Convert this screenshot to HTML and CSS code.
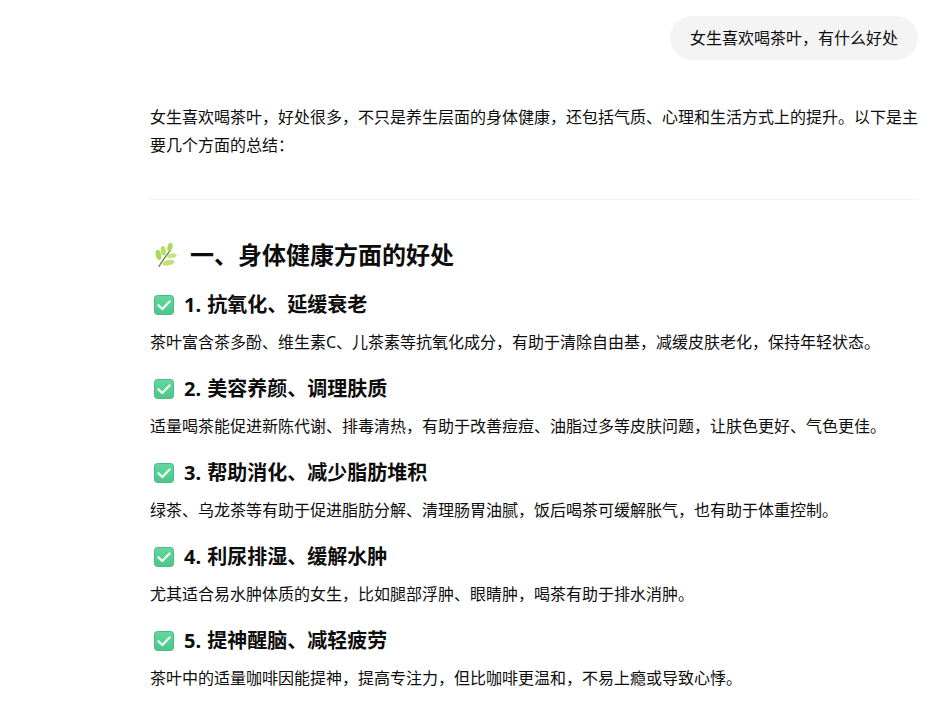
FILE: index.html
```html
<!DOCTYPE html>
<html lang="zh-CN">
<head>
<meta charset="utf-8">
<title>女生喜欢喝茶叶</title>
<link rel="stylesheet" href="styles.css">
</head>
<body>
<svg class="defs" width="0" height="0" aria-hidden="true">
  <defs>
    <linearGradient id="checkFill" x1="0" y1="0" x2="0" y2="1">
      <stop offset="0" stop-color="#63d79f"/>
      <stop offset="1" stop-color="#4cc68b"/>
    </linearGradient>
    <symbol id="check" viewBox="0 0 20 20">
      <rect x="0.500" y="0.500" width="19" height="19" rx="3" fill="url(#checkFill)" stroke="#49b885"/>
      <path d="M4.500 10.300L8.300 14L15.500 6.500" stroke="#eefaf3" stroke-width="2.400" fill="none" stroke-linecap="round" stroke-linejoin="round"/>
    </symbol>
  </defs>
</svg>
<main class="chat">
  <div class="user-row"><div class="bubble">女生喜欢喝茶叶&#xFF0C;有什么好处</div></div>
  <article class="answer">
    <p class="intro">女生喜欢喝茶叶&#xFF0C;好处很多&#xFF0C;不只是养生层面的身体健康&#xFF0C;还包括气质、心理和生活方式上的提升。以下是主要几个方面的总结&#xFF1A;</p>
    <hr class="rule">
    <h2 class="h2"><svg class="herb" viewBox="0 0 22 24"><path d="M4 23.500C7 18 11 13 15.500 7" stroke="#76834a" stroke-width="1.400" fill="none" stroke-linecap="round"/><ellipse cx="3.500" cy="12" rx="2.800" ry="5.300" transform="rotate(-12 3.500 12)" fill="#a9d95c"/><ellipse cx="8.300" cy="7.700" rx="2.500" ry="4.800" transform="rotate(-8 8.300 7.700)" fill="#b3de68"/><ellipse cx="15" cy="4.300" rx="2.500" ry="4.500" transform="rotate(12 15 4.300)" fill="#a9d95c"/><ellipse cx="16.700" cy="12.700" rx="5" ry="2.200" transform="rotate(-8 16.700 12.700)" fill="#c4e585"/><ellipse cx="13.300" cy="19.700" rx="6.200" ry="2.700" transform="rotate(-12 13.300 19.700)" fill="#bfe27a"/></svg><span>一、身体健康方面的好处</span></h2>
    <h3 class="h3"><svg class="check"><use href="#check"/></svg><span>1. 抗氧化、延缓衰老</span></h3>
    <p class="body">茶叶富含茶多酚、维生素C、儿茶素等抗氧化成分&#xFF0C;有助于清除自由基&#xFF0C;减缓皮肤老化&#xFF0C;保持年轻状态。</p>
    <h3 class="h3"><svg class="check"><use href="#check"/></svg><span>2. 美容养颜、调理肤质</span></h3>
    <p class="body">适量喝茶能促进新陈代谢、排毒清热&#xFF0C;有助于改善痘痘、油脂过多等皮肤问题&#xFF0C;让肤色更好、气色更佳。</p>
    <h3 class="h3"><svg class="check"><use href="#check"/></svg><span>3. 帮助消化、减少脂肪堆积</span></h3>
    <p class="body">绿茶、乌龙茶等有助于促进脂肪分解、清理肠胃油腻&#xFF0C;饭后喝茶可缓解胀气&#xFF0C;也有助于体重控制。</p>
    <h3 class="h3"><svg class="check"><use href="#check"/></svg><span>4. 利尿排湿、缓解水肿</span></h3>
    <p class="body">尤其适合易水肿体质的女生&#xFF0C;比如腿部浮肿、眼睛肿&#xFF0C;喝茶有助于排水消肿。</p>
    <h3 class="h3"><svg class="check"><use href="#check"/></svg><span>5. 提神醒脑、减轻疲劳</span></h3>
    <p class="body">茶叶中的适量咖啡因能提神&#xFF0C;提高专注力&#xFF0C;但比咖啡更温和&#xFF0C;不易上瘾或导致心悸。</p>
  </article>
</main>
</body>
</html>
```
FILE: styles.css
```css
html, body {
  margin: 0;
  padding: 0;
  background: #fff;
}
body {
  color: #0d0d0d;
  font-family: "Noto Sans", "Noto Sans CJK SC", sans-serif;
  font-size: 16px;
  line-height: 28px;
}
.defs {
  display: block;
  height: 0;
}
.chat {
  padding: 16px 26px 28px 150px;
  display: flex;
  flex-direction: column;
}
.user-row {
  display: flex;
  justify-content: flex-end;
}
.bubble {
  background: #f4f4f4;
  border-radius: 22px;
  padding: 8px 20px;
  font-size: 16px;
  line-height: 28px;
}
.answer {
  margin-top: 43px;
}
.intro, .body {
  margin: 0;
  font-size: 16px;
  line-height: 28px;
}
.rule {
  border: 0;
  border-top: 1px solid #f2f2f2;
  margin: 40px 0 0;
}
.h2 {
  display: flex;
  align-items: center;
  gap: 13px;
  margin: 37px 0 0;
  padding-left: 5px;
  font-size: 24px;
  line-height: 36px;
  font-weight: 700;
}
.herb {
  width: 22px;
  height: 24px;
  flex: none;
}
.h3 {
  display: flex;
  align-items: center;
  gap: 10px;
  margin: 16px 0 0;
  padding-left: 4px;
  font-size: 20px;
  line-height: 32px;
  font-weight: 700;
  word-spacing: 1px;
}
.h3 + .body {
  margin-top: 7px;
}
.body + .h3 {
  margin-top: 17px;
}
.check {
  width: 20px;
  height: 20px;
  flex: none;
}
```
